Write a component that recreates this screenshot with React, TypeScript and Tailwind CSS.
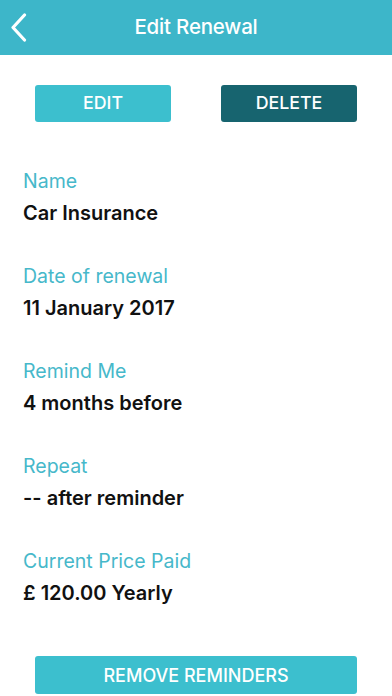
import React from "react";

const fields = [
  { label: "Name", value: "Car Insurance" },
  { label: "Date of renewal", value: "11 January 2017" },
  { label: "Remind Me", value: "4 months before" },
  { label: "Repeat", value: "-- after reminder" },
  { label: "Current Price Paid", value: "£ 120.00 Yearly" },
];

export default function App() {
  return (
    <div
      className="w-[392px] h-[696px] bg-white overflow-hidden flex flex-col"
      style={{ fontFamily: "Inter, 'Noto Sans', 'Liberation Sans', sans-serif" }}
    >
      <div className="relative h-[55px] bg-[#3db6c9] flex items-center justify-center shrink-0">
        <svg
          className="absolute left-[9px] top-[13px]"
          width="20"
          height="30"
          viewBox="0 0 20 30"
          fill="none"
        >
          <path d="M15.5 2 L4 14.5 L15.5 27" stroke="white" strokeWidth="3.2" strokeLinecap="round" strokeLinejoin="round" />
        </svg>
        <span className="text-white text-[20.5px] font-medium tracking-[-0.2px]">Edit Renewal</span>
      </div>

      <div className="flex justify-between px-[35px] mt-[30px]">
        <button className="w-[136px] h-[37px] rounded-[3px] bg-[#3cbfce] text-white text-[17.8px] font-medium">
          EDIT
        </button>
        <button className="w-[136px] h-[37px] rounded-[3px] bg-[#17646f] text-white text-[17.8px] font-medium">
          DELETE
        </button>
      </div>

      <div className="flex flex-col px-[23px] mt-[47px] gap-[39px]">
        {fields.map((f) => (
          <div key={f.label} className="flex flex-col gap-[8px]">
            <div className="h-[24px] leading-[24px] text-[19.5px] text-[#46b8ca]">{f.label}</div>
            <div className="h-[24px] leading-[24px] text-[20px] font-semibold text-[#111]">{f.value}</div>
          </div>
        ))}
      </div>

      <div className="px-[35px] mt-[51px]">
        <button className="w-full h-[38px] rounded-[3px] bg-[#3cbfce] text-white text-[18px] font-medium">
          REMOVE REMINDERS
        </button>
      </div>
    </div>
  );
}
